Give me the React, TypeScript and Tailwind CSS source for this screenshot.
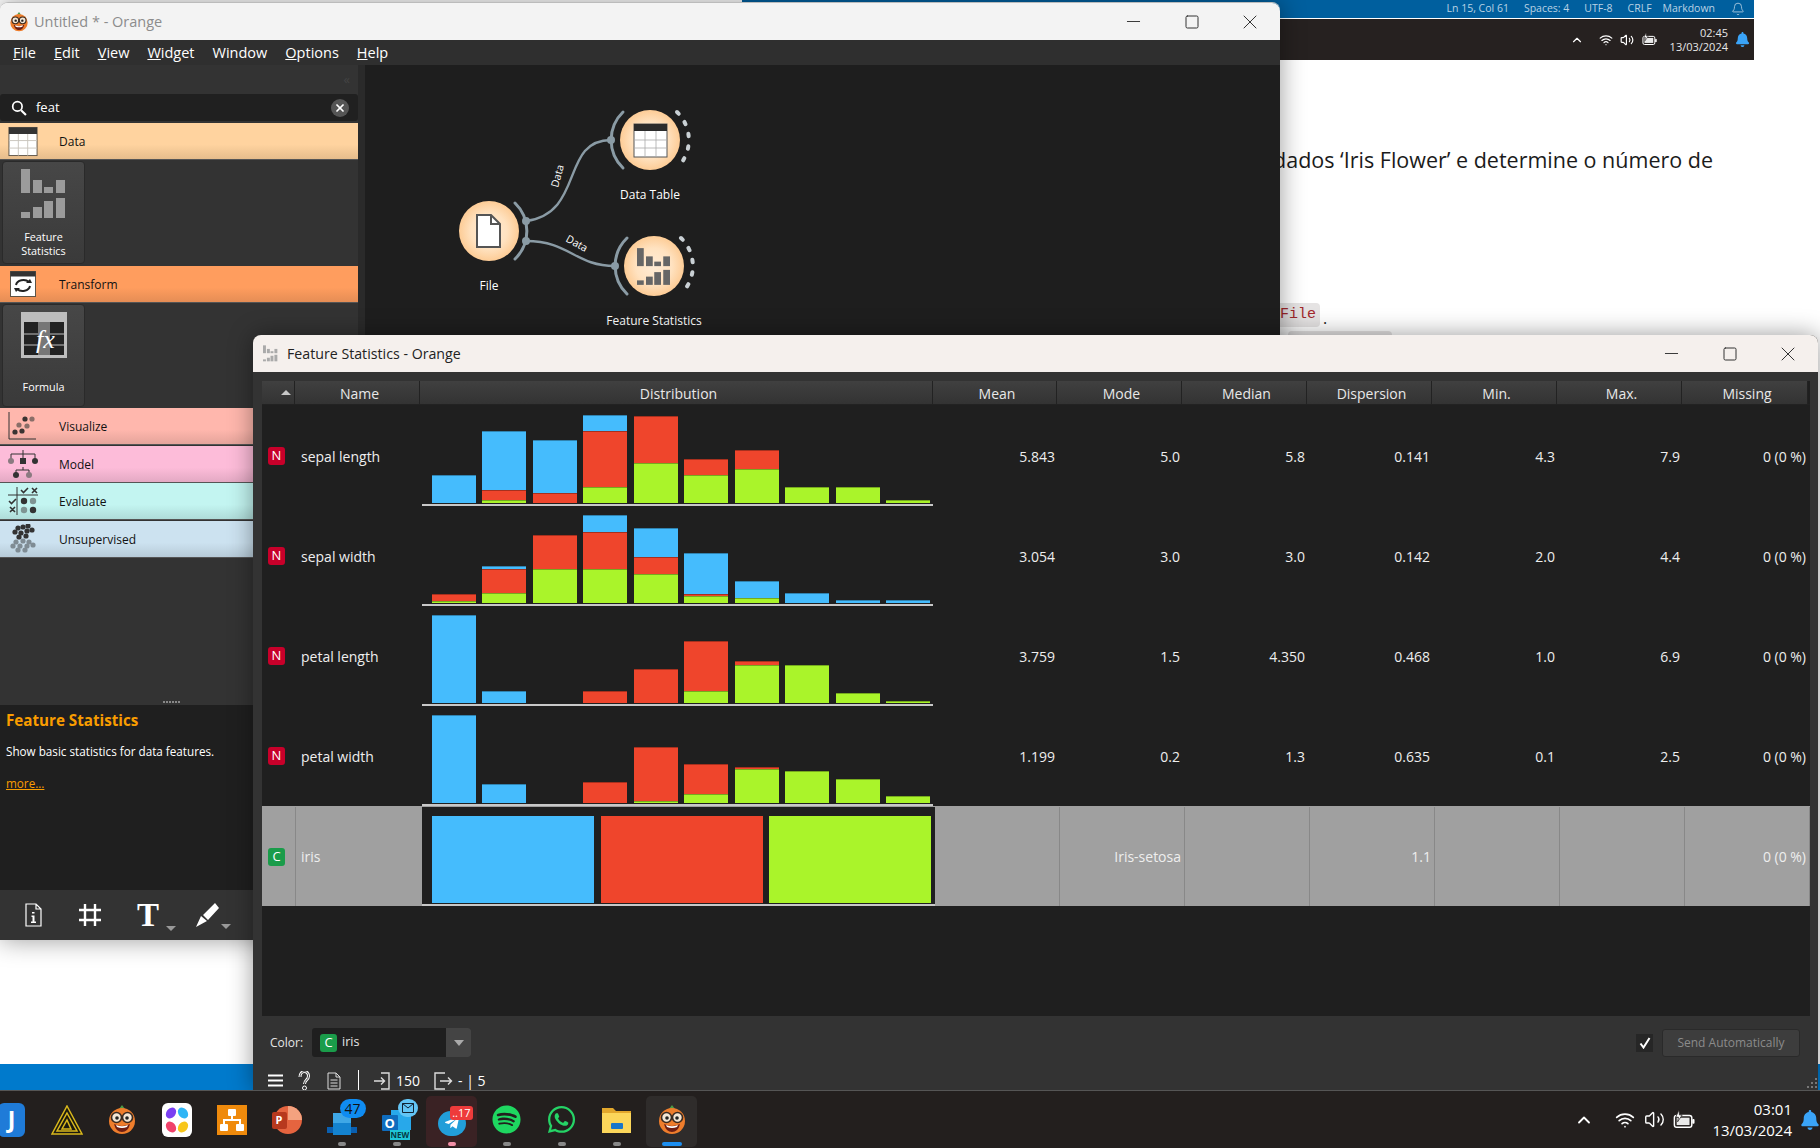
import type { ReactNode } from "react";
import { FaBell, FaSpotify, FaTelegramPlane, FaWhatsapp } from "react-icons/fa";
import { Bell, ChevronUp, Minus, Square, Volume2, Wifi, X } from "lucide-react";

const font = { fontFamily: '"Open Sans", "Noto Sans", sans-serif' };

const menuItems = [
  ["F", "ile"],
  ["E", "dit"],
  ["V", "iew"],
  ["W", "idget"],
  ["", "Window"],
  ["O", "ptions"],
  ["H", "elp"],
];

// heights in px, stacked [blue, red, green] from the top
const rows = [
  {
    name: "sepal length",
    bars: [[28, 0, 0], [59, 10, 3], [53, 10, 0], [16, 56, 16], [0, 47, 40], [0, 16, 28], [0, 19, 34], [0, 0, 16], [0, 0, 16], [0, 0, 3]],
    cells: ["5.843", "5.0", "5.8", "0.141", "4.3", "7.9", "0 (0 %)"],
  },
  {
    name: "sepal width",
    bars: [[0, 7, 2], [3, 24, 10], [0, 34, 34], [17, 37, 34], [29, 17, 29], [41, 2, 7], [17, 0, 5], [10, 0, 0], [3, 0, 0], [3, 0, 0]],
    cells: ["3.054", "3.0", "3.0", "0.142", "2.0", "4.4", "0 (0 %)"],
  },
  {
    name: "petal length",
    bars: [[88, 0, 0], [12, 0, 0], [0, 0, 0], [0, 12, 0], [0, 34, 0], [0, 50, 12], [0, 4, 38], [0, 0, 38], [0, 0, 10], [0, 0, 2]],
    cells: ["3.759", "1.5", "4.350", "0.468", "1.0", "6.9", "0 (0 %)"],
  },
  {
    name: "petal width",
    bars: [[88, 0, 0], [19, 0, 0], [0, 0, 0], [0, 21, 0], [0, 54, 2], [0, 30, 9], [0, 2, 34], [0, 0, 32], [0, 0, 24], [0, 0, 7]],
    cells: ["1.199", "0.2", "1.3", "0.635", "0.1", "2.5", "0 (0 %)"],
  },
];

const headers = ["Mean", "Mode", "Median", "Dispersion", "Min.", "Max.", "Missing"];

function OrangeFace({ size }: { size: number }) {
  return (
    <svg width={size} height={size} viewBox="1 1 30 30">
      <path d="M13 5 L16 1 L19 5 Z" fill="#4f9a45" />
      <ellipse cx="16" cy="17" rx="13" ry="13" fill="#ee7d2c" />
      <circle cx="10.5" cy="13.5" r="5" fill="#f3e6d5" stroke="#3a2a20" strokeWidth="1.6" />
      <circle cx="21.5" cy="13.5" r="5" fill="#f3e6d5" stroke="#3a2a20" strokeWidth="1.6" />
      <circle cx="11" cy="14" r="1.8" fill="#222" />
      <circle cx="21" cy="14" r="1.8" fill="#222" />
      <path d="M8 20 Q16 24 24 20 Q22 28 16 28 Q10 28 8 20 Z" fill="#6e1f14" />
      <path d="M10 21 Q16 23.5 22 21 L21 23 Q16 25 11 23 Z" fill="#fff" />
    </svg>
  );
}

function BatteryIcon({ size }: { size: number }) {
  return (
    <svg width={size} height={size} viewBox="0 0 24 24">
      <rect x="1.5" y="7" width="19" height="13" rx="2.5" fill="none" stroke="#fff" strokeWidth="1.6" />
      <rect x="4" y="9.5" width="14" height="8" fill="#fff" opacity="0.9" />
      <rect x="21" y="11" width="2.5" height="5" rx="1" fill="#fff" />
      <path d="M6.5 1L3 9H6L5 14L10 6.5H7Z" fill="#fff" stroke="#231f1e" strokeWidth="0.8" />
    </svg>
  );
}

function WindowButtons() {
  return (
    <div className="flex items-center pr-[1px] text-[#333]">
      <span className="flex w-[58px] justify-center">
        <Minus size={21} strokeWidth={1.1} />
      </span>
      <span className="flex w-[59px] justify-center">
        <Square size={16} strokeWidth={1.5} />
      </span>
      <span className="flex w-[58px] justify-center">
        <X size={24} strokeWidth={1} />
      </span>
    </div>
  );
}

function DesktopBehind() {
  return (
    <>
      <div className="absolute left-[742px] top-0 flex h-[18px] w-[1012px] items-center justify-end bg-[#005f9e] pr-[9px] text-[10.5px] text-[#b9d2e4]">
        <span className="mr-[15px]">Ln 15, Col 61</span>
        <span className="mr-[15px]">Spaces: 4</span>
        <span className="mr-[15px]">UTF-8</span>
        <span className="mr-[11px]">CRLF</span>
        <span className="mr-[16px]">Markdown</span>
        <Bell size={14} strokeWidth={1.4} className="text-[#b9d2e4]" />
      </div>
      <div className="absolute left-[742px] top-[19px] flex h-[41px] w-[1012px] items-center justify-end bg-[#262120] pr-[4px] text-white">
        <ChevronUp size={14} className="mr-[15px]" />
        <Wifi size={14} className="mr-[7px]" />
        <Volume2 size={14} className="mr-[8px]" />
        <BatteryIcon size={15} />
        <div className="ml-[13px] mr-[7px] text-right text-[11px] leading-[14px] text-[#e8e8e8]">
          <div>02:45</div>
          <div>13/03/2024</div>
        </div>
        <FaBell size={15} className="text-[#3aa4f8]" />
      </div>
      <div className="absolute right-[107px] top-[144px] whitespace-nowrap text-[21.5px] leading-[32px] text-[#1b1b1b]">
        dados ‘Iris Flower’ e determine o número de
      </div>
      <div className="absolute left-[1240px] top-[303px] rounded-[4px] bg-[#e5e3e3] pl-[40px] pr-[4px] text-[15px] leading-[24px] text-[#a3282d]" style={{ fontFamily: '"Liberation Mono", monospace' }}>
        File
      </div>
      <div className="absolute left-[1323px] top-[307px] text-[16px] leading-[22px] text-[#222]">.</div>
      <div className="absolute left-[1288px] top-[331px] h-[8px] w-[104px] rounded-[4px] bg-[#e5e3e3]" />
      <div className="absolute bottom-[58px] left-0 h-[26px] w-full bg-[#007acc]" />
    </>
  );
}

function CategoryRow({ label, icon, className }: { label: string; icon: ReactNode; className: string }) {
  return (
    <div className={`flex shrink-0 items-center border-b border-[#555] text-[12px] text-[#111] ${className}`}>
      <div className="mr-[13px] flex w-[46px] justify-center">{icon}</div>
      <span className="pt-[2px]">{label}</span>
    </div>
  );
}

function TableIcon() {
  return (
    <svg width="30" height="31" viewBox="0 0 32 32">
      <rect x="1" y="1" width="30" height="30" fill="#fff" stroke="#5c5347" />
      <rect x="1" y="1" width="30" height="7" fill="#333" />
      <path d="M11 8V31M21 8V31M1 15H31M1 23H31" stroke="#c9c4bd" strokeWidth="1" />
    </svg>
  );
}

function TransformIcon() {
  return (
    <svg width="26" height="26" viewBox="0 0 26 26">
      <rect x="0.5" y="0.5" width="25" height="25" fill="#fff" stroke="#5c5347" />
      <rect x="0.5" y="0.5" width="25" height="5" fill="#333" />
      <path d="M6 14 A7.5 6 0 0 1 19 11 M20 15 A7.5 6 0 0 1 7 18" fill="none" stroke="#222" strokeWidth="2" />
      <path d="M16 12 L22 12 L20 8 Z M10 17 L4 17 L6 21 Z" fill="#222" />
    </svg>
  );
}

function VisualizeIcon() {
  return (
    <svg width="30" height="30" viewBox="0 0 30 30">
      <path d="M1 1V28H28" fill="none" stroke="#333" strokeWidth="1" />
      <g fill="#8a6e68">
        <circle cx="11" cy="14" r="2.6" />
        <circle cx="19" cy="15" r="2.6" />
        <circle cx="24" cy="8" r="2.6" />
      </g>
      <g fill="#3a3432">
        <circle cx="17" cy="8" r="2.6" />
        <circle cx="7" cy="21" r="2.6" />
        <circle cx="14" cy="20" r="2.6" />
      </g>
    </svg>
  );
}

function ModelIcon() {
  return (
    <svg width="32" height="30" viewBox="0 0 32 30">
      <path d="M16 1V5M4 11V5H28V11M16 5V12M16 18V21M9 24V21H22V24" fill="none" stroke="#333" strokeWidth="1" />
      <circle cx="4" cy="12" r="3" fill="#8a7a80" />
      <rect x="13" y="9" width="6" height="6" fill="#333" />
      <circle cx="28" cy="12" r="3" fill="#333" />
      <circle cx="9" cy="26" r="3" fill="#333" />
      <circle cx="22" cy="26" r="3" fill="#8a7a80" />
    </svg>
  );
}

function EvaluateIcon() {
  return (
    <svg width="32" height="30" viewBox="0 0 32 30">
      <path d="M1 9H31M10 1V29" fill="none" stroke="#333" strokeWidth="1" />
      <path d="M14 4L16.5 6.5L21 2M25 2L30 7M30 2L25 7M2 15L4.5 17.5L9 13M3 21L8 26M8 21L3 26" fill="none" stroke="#333" strokeWidth="1.6" />
      <circle cx="17" cy="15" r="3.2" fill="#333" />
      <circle cx="26" cy="15" r="3.2" fill="#7f9493" />
      <circle cx="17" cy="24" r="3.2" fill="#7f9493" />
      <circle cx="26" cy="24" r="3.2" fill="#333" />
    </svg>
  );
}

function UnsupervisedIcon() {
  return (
    <svg width="30" height="30" viewBox="0 0 30 30">
      <g fill="#333">
        <circle cx="10" cy="4" r="2.6" />
        <circle cx="15" cy="3" r="2.6" />
        <circle cx="20" cy="2" r="2.6" />
        <circle cx="7" cy="8" r="2.6" />
        <circle cx="13" cy="9" r="2.6" />
        <circle cx="19" cy="7" r="2.6" />
        <circle cx="24" cy="6" r="2.6" />
        <circle cx="11" cy="13" r="2.6" />
        <circle cx="18" cy="12" r="2.6" />
      </g>
      <g fill="#7f8c94">
        <circle cx="8" cy="18" r="2.6" />
        <circle cx="15" cy="17" r="2.6" />
        <circle cx="21" cy="18" r="2.6" />
        <circle cx="5" cy="22" r="2.6" />
        <circle cx="12" cy="22" r="2.6" />
        <circle cx="19" cy="22" r="2.6" />
        <circle cx="25" cy="21" r="2.6" />
        <circle cx="10" cy="26" r="2.6" />
        <circle cx="17" cy="26" r="2.6" />
      </g>
    </svg>
  );
}

function StatBars({ fill }: { fill: string }) {
  return (
    <g fill={fill}>
      <rect x="0" y="0" width="9" height="24" />
      <rect x="12" y="11" width="9" height="13" />
      <rect x="23" y="18" width="9" height="6" />
      <rect x="35" y="11" width="9" height="13" />
      <rect x="0" y="43" width="9" height="6" />
      <rect x="12" y="38" width="9" height="11" />
      <rect x="23" y="32" width="9" height="17" />
      <rect x="35" y="29" width="9" height="20" />
    </g>
  );
}

function Tile({ label, iconArea, className, children }: { label: string[]; iconArea: string; className: string; children: ReactNode }) {
  return (
    <div className={`ml-[2px] flex h-[103px] w-[83px] shrink-0 flex-col items-center rounded-[4px] border border-[#2a2a2a] bg-gradient-to-b from-[#474747] to-[#3a3a3a] ${className}`}>
      <div className={`flex w-full items-start justify-center pt-[7px] ${iconArea}`}>{children}</div>
      <div className="text-center text-[10.8px] leading-[14px] text-white">
        {label.map((line) => (
          <div key={line}>{line}</div>
        ))}
      </div>
    </div>
  );
}

function Dock() {
  return (
    <div className="flex w-[358px] shrink-0 flex-col bg-[#333]">
      <div className="flex h-[29px] shrink-0 items-center justify-end pr-[8px] text-[13px] text-[#444]">«</div>
      <div className="flex h-[27px] shrink-0 items-center rounded-[3px] bg-[#202020] pl-[11px] pr-[9px]">
        <svg width="16" height="16" viewBox="0 0 15 15">
          <circle cx="6" cy="6" r="4.4" fill="none" stroke="#fff" strokeWidth="1.6" />
          <path d="M9.5 9.5L14 14" stroke="#fff" strokeWidth="2" />
        </svg>
        <span className="ml-[9px] flex-1 pt-[1px] text-[13px] text-white">feat</span>
        <span className="flex h-[18px] w-[18px] items-center justify-center rounded-full bg-[#555] text-white">
          <X size={12} strokeWidth={3.5} />
        </span>
      </div>
      <CategoryRow
        label="Data"
        icon={<TableIcon />}
        className="mt-[2px] h-[37px] bg-gradient-to-b from-[#ffd39f] from-60% to-[#e6bd8c]"
      />
      <Tile label={["Feature", "Statistics"]} iconArea="h-[68px]" className="mt-[1px]">
        <svg width="46" height="50" viewBox="0 0 46 50">
          <StatBars fill="#9b9b9b" />
        </svg>
      </Tile>
      <CategoryRow
        label="Transform"
        icon={<TransformIcon />}
        className="mt-[2px] h-[37px] bg-gradient-to-b from-[#ff9d5e] from-60% to-[#e58d55]"
      />
      <Tile label={["Formula"]} iconArea="h-[75px]" className="mt-[1px]">
        <svg width="46" height="46" viewBox="0 0 46 46">
          <rect x="0" y="0" width="46" height="46" fill="#bdbdbd" />
          <rect x="3" y="10" width="40" height="33" fill="#222" />
          <path d="M3 22H43M3 33H43" stroke="#bdbdbd" />
          <rect x="17" y="10" width="12" height="33" fill="#777" />
          <text x="15" y="36" fontFamily="Liberation Serif" fontStyle="italic" fontSize="26" fill="#fff">
            fx
          </text>
        </svg>
      </Tile>
      <CategoryRow
        label="Visualize"
        icon={<VisualizeIcon />}
        className="mt-[1px] h-[37px] bg-gradient-to-b from-[#ffb7ad] from-60% to-[#e5a49b]"
      />
      <CategoryRow
        label="Model"
        icon={<ModelIcon />}
        className="mt-[1px] h-[37px] bg-gradient-to-b from-[#fdbcd9] from-60% to-[#e3a9c3]"
      />
      <CategoryRow
        label="Evaluate"
        icon={<EvaluateIcon />}
        className="h-[37px] bg-gradient-to-b from-[#c3f5f1] from-60% to-[#afdcd9]"
      />
      <CategoryRow
        label="Unsupervised"
        icon={<UnsupervisedIcon />}
        className="mt-[1px] h-[37px] bg-gradient-to-b from-[#cce2f0] from-60% to-[#b7cbd8]"
      />
      <div className="flex flex-1 items-end justify-center pb-[2px]">
        <div className="mr-[16px] flex gap-[1px]">
          {[0, 1, 2, 3, 4, 5].map((dot) => (
            <span key={dot} className="h-[2px] w-[2px] bg-[#888]" />
          ))}
        </div>
      </div>
      <div className="flex h-[185px] shrink-0 flex-col bg-[#1f1f1f] pl-[6px] pt-[5px]">
        <div className="text-[15.2px] font-bold leading-[20px] text-[#f99d00]">Feature Statistics</div>
        <div className="mt-[12px] text-[11.7px] leading-[18px] text-white">Show basic statistics for data features.</div>
        <div className="mt-[14px] text-[11.7px] leading-[18px] text-[#f99d00] underline">more...</div>
      </div>
      <div className="flex h-[50px] shrink-0 items-center rounded-bl-[8px] text-white">
        <svg className="ml-[25px]" width="17" height="24" viewBox="0 0 17 24">
          <path d="M1 1H11L16 6V23H1Z M11 1V6H16" fill="none" stroke="#fff" strokeWidth="1.2" />
          <path d="M7 9H9.5V10.5H7Z M6.5 12.5H9.5V18.5H11V20H6V18.5H7.5V14H6.5Z" fill="#fff" />
        </svg>
        <svg className="ml-[36px]" width="24" height="24" viewBox="0 0 24 24">
          <path d="M7 1V23M17 1V23M1 7H23M1 17H23" stroke="#fff" strokeWidth="2.4" />
        </svg>
        <div className="ml-[35px] flex w-[60px] items-end">
          <span className="text-[33px] font-bold leading-[34px] text-white" style={{ fontFamily: '"Liberation Serif", serif' }}>
            T
          </span>
          <span className="mb-[1px] ml-[7px] h-0 w-0 border-x-[5px] border-t-[5px] border-x-transparent border-t-[#999]" />
        </div>
        <svg className="-ml-[2px]" width="24" height="26" viewBox="0 0 24 26">
          <path d="M1 25L6 14L12 19Z M8 13L20 1L24 6L13 18Z" fill="#fff" />
        </svg>
        <span className="ml-[2px] mt-[23px] h-0 w-0 border-x-[5px] border-t-[5px] border-x-transparent border-t-[#999]" />
      </div>
    </div>
  );
}

function NodeAnchors({ cx, cy }: { cx: number; cy: number }) {
  return (
    <>
      <path d={`M${cx - 27} ${cy - 28} A39 39 0 0 0 ${cx - 27} ${cy + 28}`} fill="none" stroke="#8a9ba5" strokeWidth="3" strokeLinecap="round" />
      <circle cx={cx - 39} cy={cy} r="4" fill="#8a9ba5" />
      <path d={`M${cx + 27} ${cy - 28} A39 39 0 0 1 ${cx + 27} ${cy + 28}`} fill="none" stroke="#c9d0d4" strokeWidth="4" strokeLinecap="round" strokeDasharray="2.5 10" />
    </>
  );
}

function Canvas() {
  return (
    <div className="relative flex-1 overflow-hidden bg-[#1e1e1e] text-[12px] text-white">
      <svg className="absolute left-0 top-0" width="915" height="290" viewBox="365 65 915 290">
        <defs>
          <radialGradient id="nodeFill">
            <stop offset="0%" stopColor="#ffecd6" />
            <stop offset="60%" stopColor="#ffe2c0" />
            <stop offset="100%" stopColor="#fdcc96" />
          </radialGradient>
        </defs>
        <path d="M526 221 C585 213 560 140 611 140" fill="none" stroke="#8a9ba5" strokeWidth="2.4" />
        <path d="M526 241 C570 241 575 266 615 266" fill="none" stroke="#8a9ba5" strokeWidth="2.4" />
        <text transform="translate(558 188) rotate(-75)" fontSize="10.5" fill="#fff" fontFamily="Open Sans">
          Data
        </text>
        <text transform="translate(565 241) rotate(29)" fontSize="10.5" fill="#fff" fontFamily="Open Sans">
          Data
        </text>

        <circle cx="489" cy="231" r="30" fill="url(#nodeFill)" />
        <path d="M515 203 A39 39 0 0 1 515 259" fill="none" stroke="#8a9ba5" strokeWidth="3" strokeLinecap="round" />
        <circle cx="526" cy="221" r="4" fill="#8a9ba5" />
        <circle cx="526" cy="241" r="4" fill="#8a9ba5" />
        <path d="M477 215H491L500 224V247H477Z" fill="#fff" stroke="#555" strokeWidth="2" />
        <path d="M491 215V224H500" fill="none" stroke="#555" strokeWidth="2" />

        <circle cx="650" cy="140" r="30" fill="url(#nodeFill)" />
        <NodeAnchors cx={650} cy={140} />
        <rect x="634" y="124" width="33" height="33" fill="#fff" stroke="#555" />
        <rect x="634" y="124" width="33" height="7" fill="#2b2b2b" />
        <path d="M645 131V157M656 131V157M634 140H667M634 148H667" stroke="#aaa" strokeWidth="0.8" />

        <circle cx="654" cy="266" r="30" fill="url(#nodeFill)" />
        <NodeAnchors cx={654} cy={266} />
        <svg x="637" y="248" width="33" height="37" viewBox="0 0 44 49">
          <StatBars fill="#666" />
        </svg>
      </svg>
      <div className="absolute left-[104px] top-[212px] w-[40px] text-center leading-[18px]">File</div>
      <div className="absolute left-[245px] top-[121px] w-[80px] text-center leading-[18px]">Data Table</div>
      <div className="absolute left-[239px] top-[247px] w-[100px] whitespace-nowrap text-center leading-[18px]">Feature Statistics</div>
    </div>
  );
}

function OrangeWindow() {
  return (
    <div className="absolute left-0 top-[2px] flex h-[938px] w-[1280px] flex-col rounded-t-[8px] border-t border-[#bbb] shadow-[0_0_26px_rgba(0,0,0,0.4)]">
      <div className="flex h-[37px] shrink-0 items-center justify-between rounded-t-[8px] bg-[#f3f3f3] pl-[9px]">
        <div className="flex items-center gap-[5px] text-[14.5px] text-[#8c8c8c]">
          <OrangeFace size={20} />
          Untitled * - Orange
        </div>
        <WindowButtons />
      </div>
      <div className="flex h-[25px] shrink-0 items-center gap-[18px] bg-[#2f2f2f] pl-[13px] text-[14.5px] text-white">
        {menuItems.map(([key, rest]) => (
          <span key={rest}>
            <span className="underline">{key}</span>
            {rest}
          </span>
        ))}
      </div>
      <div className="flex min-h-0 flex-1">
        <Dock />
        <div className="w-[7px] shrink-0 bg-[#2a2a2a]" />
        <Canvas />
      </div>
    </div>
  );
}

const topGrid = "grid grid-cols-[33px_125px_513px_124px_125px_125px_125px_125px_125px_126px]";
const irisGrid = "grid grid-cols-[34px_126px_513px_125px_125px_125px_125px_125px_125px_125px]";

function TypeBadge({ letter, className }: { letter: string; className: string }) {
  return (
    <span className={`flex h-[18px] w-[17px] items-center justify-center rounded-[3px] text-[13px] text-white ${className}`}>
      {letter}
    </span>
  );
}

function Histogram({ bars }: { bars: number[][] }) {
  return (
    <div className="flex h-full flex-col justify-end">
      <div className="flex items-end gap-[6.45px] pl-[12px]">
        {bars.map((bar, index) => (
          <div key={index} className="flex w-[44px] flex-col">
            <div className="border-t border-black/30 bg-[#45bcfd]" style={{ height: bar[0], display: bar[0] ? "block" : "none" }} />
            <div className="border-t border-black/30 bg-[#ef452c]" style={{ height: bar[1], display: bar[1] ? "block" : "none" }} />
            <div className="border-t border-black/30 bg-[#aaf42a]" style={{ height: bar[2], display: bar[2] ? "block" : "none" }} />
          </div>
        ))}
      </div>
      <div className="ml-[2px] mt-[1px] h-[2px] bg-[#c8c8c8]" />
    </div>
  );
}

function StatsTable() {
  return (
    <div className="mx-[9px] mt-[9px] h-[635px] w-[1548px] overflow-hidden bg-[#1f1f1f] text-[14px] text-[#eee]">
      <div className={`${topGrid} h-[24px] border-b border-[#222] text-[#e8e8e8]`}>
        <div className="flex items-center justify-end border-r border-[#222] bg-gradient-to-b from-[#404040] to-[#333] pr-[3px]">
          <span className="h-0 w-0 border-x-[5px] border-b-[5px] border-x-transparent border-b-[#c8c8c8]" />
        </div>
        {["Name", "Distribution", ...headers].map((title) => (
          <div key={title} className="flex items-center justify-center border-r border-[#222] bg-gradient-to-b from-[#404040] to-[#333] pl-[5px] pt-[1px]">
            {title}
          </div>
        ))}
      </div>
      <div className="h-[1px]" />
      {rows.map((row) => (
        <div key={row.name} className={`${topGrid} h-[100px]`}>
          <div className="flex items-center pl-[6px]">
            <TypeBadge letter="N" className="bg-[#c8002a]" />
          </div>
          <div className="flex items-center pl-[6px]">{row.name}</div>
          <Histogram bars={row.bars} />
          {row.cells.map((cell, index) => (
            <div key={index} className="flex items-center justify-end pr-[2px]">
              {cell}
            </div>
          ))}
        </div>
      ))}
      <div className={`${irisGrid} h-[100px] bg-[#a0a0a0] pt-[1px] text-[#eee]`}>
        <div className="flex items-center border-r border-[#888] pl-[6px]">
          <TypeBadge letter="C" className="bg-[#1a9c4a]" />
        </div>
        <div className="flex items-center pl-[5px]">iris</div>
        <div className="flex h-full flex-col justify-end bg-[#1f1f1f]">
          <div className="flex h-[87px] gap-[6.5px] pl-[10px]">
            <div className="h-full w-[162px] bg-[#45bcfd]" />
            <div className="h-full w-[162px] bg-[#ef452c]" />
            <div className="h-full w-[162px] bg-[#aaf42a]" />
          </div>
          <div className="mt-[1px] h-[2px] bg-[#c8c8c8]" />
        </div>
        {["", "Iris-setosa", "", "1.1", "", "", "0 (0 %)"].map((cell, index) => (
          <div key={index} className="flex items-center justify-end border-r border-[#888] pr-[3px]">
            {cell}
          </div>
        ))}
      </div>
    </div>
  );
}

function FeatureStatsWindow() {
  return (
    <div className="absolute left-[253px] top-[335px] flex h-[756px] w-[1565px] flex-col overflow-hidden rounded-t-[8px] bg-[#333] shadow-[0_0_24px_rgba(0,0,0,0.4)]">
      <div className="flex h-[37px] shrink-0 items-center justify-between bg-[#f5f0ed] pl-[10px]">
        <div className="flex items-center gap-[9px] text-[14.2px] text-[#222]">
          <svg width="15" height="17" viewBox="0 0 46 50">
            <StatBars fill="#aaa" />
          </svg>
          Feature Statistics - Orange
        </div>
        <WindowButtons />
      </div>
      <StatsTable />
      <div className="flex h-[40px] shrink-0 items-center pl-[17px] pr-[18px] pt-[13px] text-[12px] text-[#e6e6e6]">
        <span>Color:</span>
        <div className="ml-[9px] flex h-[29px] w-[159px] items-center rounded-[3px] bg-[#1f1f1f] pl-[8px]">
          <TypeBadge letter="C" className="bg-[#1a9c4a]" />
          <span className="ml-[5px] flex-1 text-[12.5px]">iris</span>
          <span className="flex h-full w-[25px] items-center justify-center rounded-r-[3px] bg-[#444]">
            <span className="h-0 w-0 border-x-[5px] border-t-[6px] border-x-transparent border-t-[#aaa]" />
          </span>
        </div>
        <div className="ml-auto flex h-[18px] w-[17px] items-center justify-center bg-[#262626]">
          <svg width="12" height="12" viewBox="0 0 12 12">
            <path d="M1.5 6.5L4.5 10.5L10.5 1" fill="none" stroke="#fff" strokeWidth="2" />
          </svg>
        </div>
        <div className="ml-[9px] flex h-[28px] w-[138px] items-center justify-center rounded-[3px] border border-[#2a2a2a] bg-[#3d3d3d] text-[12px] text-[#8b8b8b]">
          Send Automatically
        </div>
      </div>
      <div className="relative flex min-h-0 flex-1 items-center pl-[15px] pt-[14px] text-[14px] text-white">
        <svg width="15" height="13" viewBox="0 0 15 13">
          <path d="M0 1.5H15M0 6.5H15M0 11.5H15" stroke="#fff" strokeWidth="2" />
        </svg>
        <svg className="ml-[15px]" width="12" height="20" viewBox="0 0 12 20">
          <path d="M2 6 C2 -1 10.5 -1 10.5 5 C10.5 9 6.5 9 6.5 13" fill="none" stroke="#fff" strokeWidth="3" />
          <path d="M2 6 C2 -1 10.5 -1 10.5 5 C10.5 9 6.5 9 6.5 13" fill="none" stroke="#333" strokeWidth="1" />
          <circle cx="6.5" cy="17" r="2" fill="none" stroke="#fff" strokeWidth="1" />
        </svg>
        <svg className="ml-[17px]" width="14" height="18" viewBox="0 0 14 18">
          <path d="M1 1H9L13 5V17H1Z M9 1V5H13 M3.5 8H10.5M3.5 11H10.5M3.5 14H10.5" fill="none" stroke="#ddd" strokeWidth="1" />
        </svg>
        <span className="ml-[17px] h-[22px] w-[1px] bg-white" />
        <svg className="ml-[14px]" width="17" height="18" viewBox="0 0 17 18">
          <path d="M8 1H16V17H8 M1 9H11 M8 5.5L11.5 9L8 12.5" fill="none" stroke="#ddd" strokeWidth="1.4" />
        </svg>
        <span className="ml-[6px]">150</span>
        <svg className="ml-[14px]" width="19" height="18" viewBox="0 0 19 18">
          <path d="M11 1H1V17H11 M6 9H17 M14 5.5L17.5 9L14 12.5" fill="none" stroke="#ddd" strokeWidth="1.4" />
        </svg>
        <span className="ml-[5px]">- | 5</span>
        <svg className="absolute bottom-0 right-0" width="14" height="14" viewBox="0 0 14 14">
          <g fill="#777">
            <rect x="11" y="1" width="2" height="2" />
            <rect x="7" y="5" width="2" height="2" />
            <rect x="11" y="5" width="2" height="2" />
            <rect x="3" y="9" width="2" height="2" />
            <rect x="7" y="9" width="2" height="2" />
            <rect x="11" y="9" width="2" height="2" />
          </g>
        </svg>
      </div>
    </div>
  );
}

function TaskbarItem({ children, active, dot }: { children: ReactNode; active?: string; dot?: string }) {
  return (
    <div className="relative flex h-full w-[55px] shrink-0 items-center justify-center">
      {active ? <div className={`absolute inset-x-[2px] bottom-[1px] top-[5px] rounded-[5px] ${active}`} /> : null}
      <div className="relative flex h-[34px] w-[34px] items-center justify-center">{children}</div>
      {dot ? <span className={`absolute bottom-[2px] left-1/2 h-[4px] -translate-x-1/2 rounded-full ${dot}`} /> : null}
    </div>
  );
}

function Taskbar() {
  return (
    <div className="absolute bottom-0 left-0 flex h-[58px] w-full items-center border-t border-[#555] bg-[#231f1e] text-white">
      <div className="-ml-[16px] flex h-full items-center">
        <TaskbarItem>
          <div className="flex h-[34px] w-[27px] items-center justify-center rounded-[6px] bg-[#1f7bd8] text-[23px] font-bold text-white">J</div>
        </TaskbarItem>
        <TaskbarItem>
          <svg width="32" height="30" viewBox="0 0 32 30">
            <path d="M16 1L31 29H1Z M16 8L26 26H6Z M16 15L20 24H11Z" fill="#1c1a10" stroke="#d9b81c" strokeWidth="1.5" />
          </svg>
        </TaskbarItem>
        <TaskbarItem>
          <OrangeFace size={30} />
        </TaskbarItem>
        <TaskbarItem>
          <svg width="30" height="34" viewBox="0 0 30 34">
            <rect width="30" height="34" rx="6" fill="#fff" />
            <ellipse cx="9" cy="10" rx="6" ry="4.5" fill="#7a3ff2" transform="rotate(-50 9 10)" />
            <ellipse cx="21" cy="10" rx="6" ry="4.5" fill="#2fb5f5" transform="rotate(50 21 10)" />
            <ellipse cx="9" cy="24" rx="6" ry="4.5" fill="#f0426b" transform="rotate(50 9 24)" />
            <ellipse cx="21" cy="24" rx="6" ry="4.5" fill="#f8c61a" transform="rotate(-50 21 24)" />
          </svg>
        </TaskbarItem>
        <TaskbarItem>
          <svg width="30" height="30" viewBox="0 0 30 30">
            <rect width="30" height="30" fill="#ef8a0c" />
            <path d="M15 9V15M7 20V15H23V20" fill="none" stroke="#fff" strokeWidth="2" />
            <rect x="11" y="4" width="8" height="7" rx="1" fill="#fff" />
            <rect x="3" y="19" width="8" height="7" rx="1" fill="#fff" />
            <rect x="19" y="19" width="8" height="7" rx="1" fill="#fff" />
          </svg>
        </TaskbarItem>
        <TaskbarItem>
          <svg width="30" height="30" viewBox="0 0 30 30">
            <circle cx="16" cy="15" r="14" fill="#e5643f" />
            <path d="M16 1A14 14 0 0 1 30 15H16Z" fill="#f4a27f" />
          </svg>
          <span className="absolute left-[2px] top-[9px] flex h-[17px] w-[15px] items-center justify-center rounded-[2px] bg-[#b7391e] text-[11px] font-bold text-white">P</span>
        </TaskbarItem>
        <TaskbarItem dot="w-[8px] bg-[#888]">
          <svg width="30" height="22" viewBox="0 0 30 22" className="mt-[8px]">
            <rect x="0" y="14" width="30" height="6" fill="#0a5fb0" />
            <rect x="6" y="0" width="18" height="14" fill="#3fa7e6" />
            <rect x="6" y="10" width="18" height="12" fill="#1483d0" />
          </svg>
          <span className="absolute -right-[7px] -top-[4px] flex h-[19px] w-[26px] items-center justify-center rounded-full bg-[#0f8cf2] text-[14px] text-[#111]">47</span>
        </TaskbarItem>
        <TaskbarItem dot="w-[8px] bg-[#888]">
          <svg width="32" height="32" viewBox="0 0 32 32">
            <rect x="10" y="6" width="20" height="20" fill="#28a8ea" />
            <rect x="1" y="11" width="16" height="16" rx="1" fill="#0f6cbd" />
          </svg>
          <span className="absolute left-[5px] top-[11px] text-[13px] font-bold text-white">O</span>
          <span className="absolute -right-[4px] -top-[4px] flex h-[18px] w-[20px] items-center justify-center rounded-full bg-[#63c5f5]">
            <svg width="12" height="10" viewBox="0 0 12 10">
              <path d="M0.5 0.5H11.5V9.5H0.5Z M0.5 0.5L6 5L11.5 0.5" fill="none" stroke="#123" strokeWidth="1" />
            </svg>
          </span>
          <span className="absolute bottom-[-3px] left-[10px] bg-[#1fc6d8] px-[1px] text-[8px] font-bold leading-[10px] text-[#063a44]">NEW</span>
        </TaskbarItem>
        <TaskbarItem active="bg-[#3a2224]" dot="w-[8px] bg-[#f28fa6]">
          <span className="mt-[7px] flex h-[25px] w-[28px] items-center justify-center rounded-full bg-[#229ed9]">
            <FaTelegramPlane size={16} className="text-white" />
          </span>
          <span className="absolute -right-[4px] top-[3px] rounded-[3px] bg-[#ee3b3b] px-[2px] text-[11px] leading-[14px] text-white">..17</span>
        </TaskbarItem>
        <TaskbarItem dot="w-[8px] bg-[#888]">
          <FaSpotify size={29} className="text-[#1ed760]" />
        </TaskbarItem>
        <TaskbarItem dot="w-[8px] bg-[#888]">
          <FaWhatsapp size={31} className="text-[#25d366]" />
        </TaskbarItem>
        <TaskbarItem dot="w-[8px] bg-[#888]">
          <svg width="31" height="29" viewBox="0 0 31 29">
            <path d="M1 3H12L15 6H30V28H1Z" fill="#e2a72c" />
            <rect x="1" y="8" width="29" height="20" fill="#fbd65a" />
            <rect x="10" y="18" width="12" height="6" rx="1" fill="#1976c9" />
          </svg>
        </TaskbarItem>
        <TaskbarItem active="bg-[#2f2c2b]" dot="w-[20px] bg-[#1c8ef0]">
          <OrangeFace size={30} />
        </TaskbarItem>
      </div>
      <div className="ml-auto flex items-center pr-[1px]">
        <ChevronUp size={20} strokeWidth={2.2} className="mr-[21px]" />
        <Wifi size={20} className="mr-[9px]" />
        <Volume2 size={21} strokeWidth={1.6} className="mr-[8px]" />
        <BatteryIcon size={22} />
        <div className="ml-[17px] mr-[8px] text-right text-[15px] leading-[21px] text-white">
          <div>03:01</div>
          <div>13/03/2024</div>
        </div>
        <FaBell size={20} className="-mr-[1px] text-[#3aa4f8]" />
      </div>
    </div>
  );
}

export default function App() {
  return (
    <div className="relative h-[1148px] w-[1820px] overflow-hidden bg-white" style={font}>
      <DesktopBehind />
      <OrangeWindow />
      <FeatureStatsWindow />
      <Taskbar />
    </div>
  );
}
